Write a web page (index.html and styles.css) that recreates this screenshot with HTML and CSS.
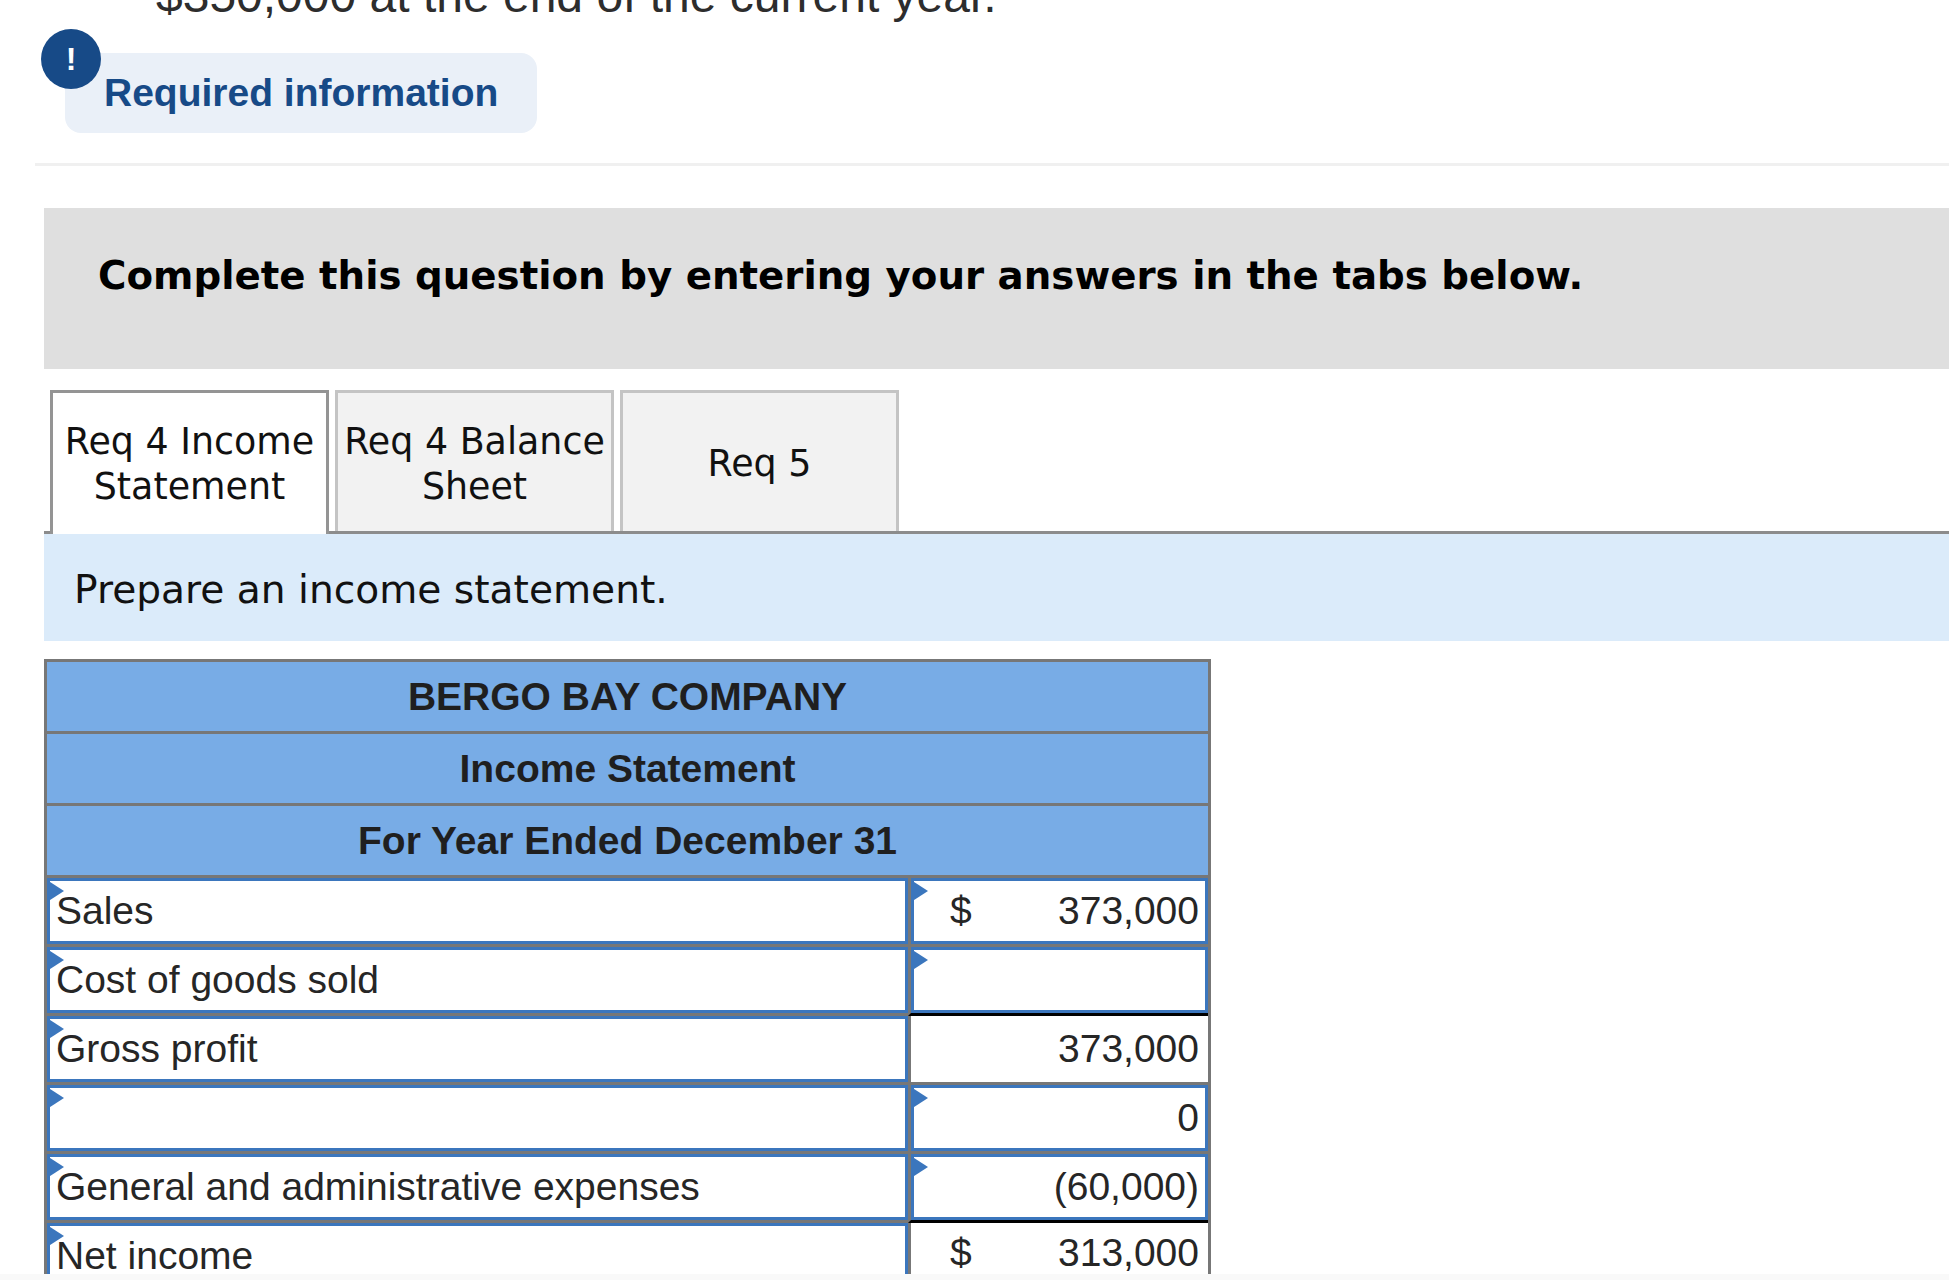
FILE: index.html
```html
<!DOCTYPE html>
<html lang="en">
<head>
<meta charset="utf-8">
<title>Income statement</title>
<link rel="stylesheet" href="styles.css">
</head>
<body>
<div class="page">
  <p class="lead">$350,000 at the end of the current year.</p>
  <div class="notice">
    <span class="notice-badge">!</span>
    <div class="notice-pill">Required information</div>
  </div>
  <hr class="rule">
  <div class="content">
    <div class="banner">Complete this question by entering your answers in the tabs below.</div>
    <div class="tabs">
      <div class="tab tab-active">Req 4 Income<br>Statement</div>
      <div class="tab">Req 4 Balance<br>Sheet</div>
      <div class="tab">Req 5</div>
    </div>
    <div class="prompt">Prepare an income statement.</div>
    <table class="sheet">
      <colgroup><col class="col-label"><col class="col-value"></colgroup>
      <thead>
        <tr><th colspan="2">BERGO BAY COMPANY</th></tr>
        <tr><th colspan="2">Income Statement</th></tr>
        <tr><th colspan="2">For Year Ended December 31</th></tr>
      </thead>
      <tbody>
        <tr>
          <td class="cell input">Sales</td>
          <td class="cell input amount"><span class="sym">$</span><span>373,000</span></td>
        </tr>
        <tr>
          <td class="cell input">Cost of goods sold</td>
          <td class="cell input amount above-total"></td>
        </tr>
        <tr>
          <td class="cell input">Gross profit</td>
          <td class="cell amount"><span>373,000</span></td>
        </tr>
        <tr>
          <td class="cell input"></td>
          <td class="cell input amount"><span>0</span></td>
        </tr>
        <tr>
          <td class="cell input">General and administrative expenses</td>
          <td class="cell input amount above-total"><span>(60,000)</span></td>
        </tr>
        <tr>
          <td class="cell input">Net income</td>
          <td class="cell amount net"><span class="sym">$</span><span>313,000</span></td>
        </tr>
      </tbody>
    </table>
  </div>
</div>
</body>
</html>
```
FILE: styles.css
```css
* { box-sizing: border-box; }
html, body { margin: 0; padding: 0; }
body { background: #f9f9f9; height: 1280px; overflow: hidden; }
.page { height: 1274px; overflow: hidden; background: #fff; }
.lead {
  margin: -28px 0 0 156px;
  height: 48px;
  font: 48px/48px "Liberation Sans", Arial, sans-serif;
  color: #2d2d2d;
  white-space: nowrap;
}
.notice { position: relative; margin: 33px 0 0 65px; width: 472px; }
.notice-pill {
  height: 80px;
  padding-left: 39px;
  background: #eaf0f8;
  border-radius: 16px;
  font: bold 39px/80px "Liberation Sans", Arial, sans-serif;
  color: #174a87;
}
.notice-badge {
  position: absolute;
  left: -24px;
  top: -24px;
  width: 60px;
  height: 60px;
  border-radius: 50%;
  background: #174a87;
  color: #fff;
  font: bold 32px/60px "Liberation Sans", Arial, sans-serif;
  text-align: center;
}
.rule { height: 3px; margin: 30px 0 0 35px; border: 0; background: #f0f0f0; }
.content { margin: 42px 0 0 44px; }
.banner {
  height: 161px;
  padding: 0 0 0 54px;
  background: #dfdfdf;
  font: bold 38.75px/135px "DejaVu Sans", Verdana, sans-serif;
  color: #000;
  white-space: nowrap;
}
.tabs {
  display: flex;
  align-items: flex-start;
  gap: 6px;
  height: 144px;
  margin-top: 21px;
  padding-left: 6px;
  border-bottom: 3px solid #8c8c8c;
}
.tab {
  display: flex;
  align-items: center;
  justify-content: center;
  width: 279px;
  height: 141px;
  padding: 7px 0 2px;
  background: #f2f2f2;
  border: 3px solid #c4c4c4;
  border-bottom: 0;
  font: 36.4px/44.5px "DejaVu Sans", Verdana, sans-serif;
  color: #111;
  text-align: center;
  white-space: nowrap;
}
.tab-active { height: 144px; padding: 7px 0 5px; background: #fff; border-color: #949494; }
.prompt {
  height: 107px;
  padding-left: 30px;
  background: #dbebfa;
  font: 39.15px/112px "DejaVu Sans", Verdana, sans-serif;
  color: #111;
}
.sheet {
  margin-top: 18px;
  width: 1167px;
  table-layout: fixed;
  border-collapse: separate;
  border-spacing: 0;
  border: 3px solid #777;
  border-bottom: 0;
  font-family: "Liberation Sans", Arial, sans-serif;
  color: #262626;
}
.col-label { width: 861px; }
.sheet th {
  height: 72px;
  padding: 0;
  background: #78ace6;
  border-bottom: 3px solid #777;
  color: #1f1f1f;
  font-size: 39px;
  font-weight: bold;
  text-align: center;
}
.cell {
  position: relative;
  height: 69px;
  padding: 0 9px;
  font-size: 39px;
  border-bottom: 3px solid #777;
  white-space: nowrap;
}
.cell + .cell { border-left: 3px solid #777; }
.input { box-shadow: inset 0 0 0 3px #3b76bd; }
.input::before {
  content: "";
  position: absolute;
  left: 0;
  top: 2px;
  border-left: 17px solid #3b76bd;
  border-top: 11px solid transparent;
  border-bottom: 11px solid transparent;
}
.amount { text-align: right; }
.sym { float: left; margin-left: 30px; }
.above-total { border-bottom-color: #000; }
.net { padding-bottom: 6px; }
```
